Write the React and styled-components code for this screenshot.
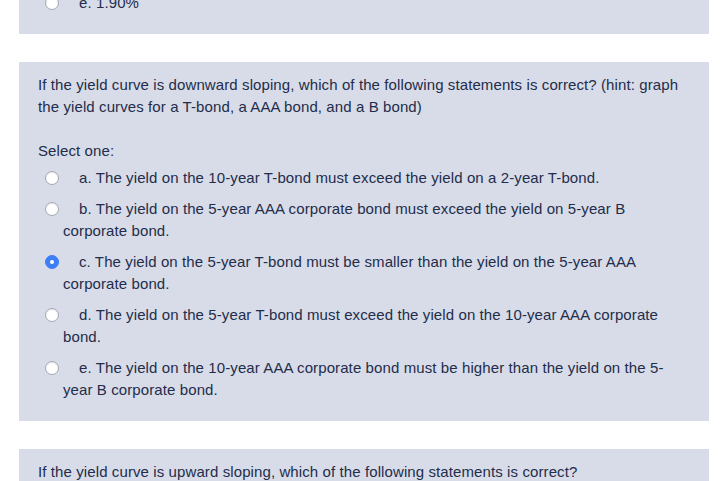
import React from 'react'
import styled, { createGlobalStyle } from 'styled-components'

const GlobalStyle = createGlobalStyle`
  html, body {
    margin: 0;
    padding: 0;
    background: #ffffff;
    overflow: hidden;
  }
  body {
    font-family: "Liberation Sans", Arial, sans-serif;
    color: #232d4b;
    letter-spacing: 0.1px;
  }
`

const Page = styled.div`
  width: 690px;
  margin: -8px 0 0 19px;
  display: flex;
  flex-direction: column;
  gap: 28px;
`

const Panel = styled.div`
  background: #d8dce8;
  padding: ${props => (props.cut ? '0' : '12px')} 19px 20px 19px;
`

const QuestionText = styled.div`
  font-size: 15px;
  line-height: 22px;
`

const Prompt = styled.div`
  font-size: 15px;
  line-height: 22px;
  margin-top: 22px;
`

const Answers = styled.div`
  display: flex;
  flex-direction: column;
  gap: 9px;
  margin-top: ${props => (props.cut ? '0' : '5px')};
`

const Option = styled.label`
  display: block;
  font-size: 15px;
  line-height: 22px;
  padding-left: 25px;
  padding-right: 18px;
  text-indent: -18px;
`

const Radio = styled.span`
  display: inline-block;
  box-sizing: border-box;
  width: 14px;
  height: 14px;
  border-radius: 50%;
  vertical-align: -2px;
  margin-right: 20px;
  text-indent: 0;
  position: relative;
  background: ${props => (props.checked ? '#3d7ef5' : '#ffffff')};
  border: 1px solid ${props => (props.checked ? '#3d7ef5' : '#a3a7b1')};
  box-shadow: ${props => (props.checked ? 'none' : 'inset 0 1px 1px rgba(0,0,0,0.1)')};

  &::after {
    content: '';
    display: ${props => (props.checked ? 'block' : 'none')};
    position: absolute;
    left: 4px;
    top: 4px;
    width: 4px;
    height: 4px;
    border-radius: 50%;
    background: #ffffff;
  }
`

const questions = [
  {
    text: 'If the yield curve is downward sloping, which of the following statements is correct? (hint: graph the yield curves for a T-bond, a AAA bond, and a B bond)',
    checked: 2,
    options: [
      'a. The yield on the 10-year T-bond must exceed the yield on a 2-year T-bond.',
      'b. The yield on the 5-year AAA corporate bond must exceed the yield on 5-year B corporate bond.',
      'c. The yield on the 5-year T-bond must be smaller than the yield on the 5-year AAA corporate bond.',
      'd. The yield on the 5-year T-bond must exceed the yield on the 10-year AAA corporate bond.',
      'e. The yield on the 10-year AAA corporate bond must be higher than the yield on the 5-year B corporate bond.',
    ],
  },
]

const App = () => {
  return (
    <>
      <GlobalStyle />
      <Page>
        <Panel cut>
          <Answers cut>
            <Option>
              <Radio />
              e. 1.90%
            </Option>
          </Answers>
        </Panel>
        {questions.map((q, qi) => (
          <Panel key={qi}>
            <QuestionText>{q.text}</QuestionText>
            <Prompt>Select one:</Prompt>
            <Answers>
              {q.options.map((opt, i) => (
                <Option key={i}>
                  <Radio checked={i === q.checked} />
                  {opt}
                </Option>
              ))}
            </Answers>
          </Panel>
        ))}
        <Panel>
          <QuestionText>
            If the yield curve is upward sloping, which of the following statements is correct?
          </QuestionText>
        </Panel>
      </Page>
    </>
  )
}

export default App
